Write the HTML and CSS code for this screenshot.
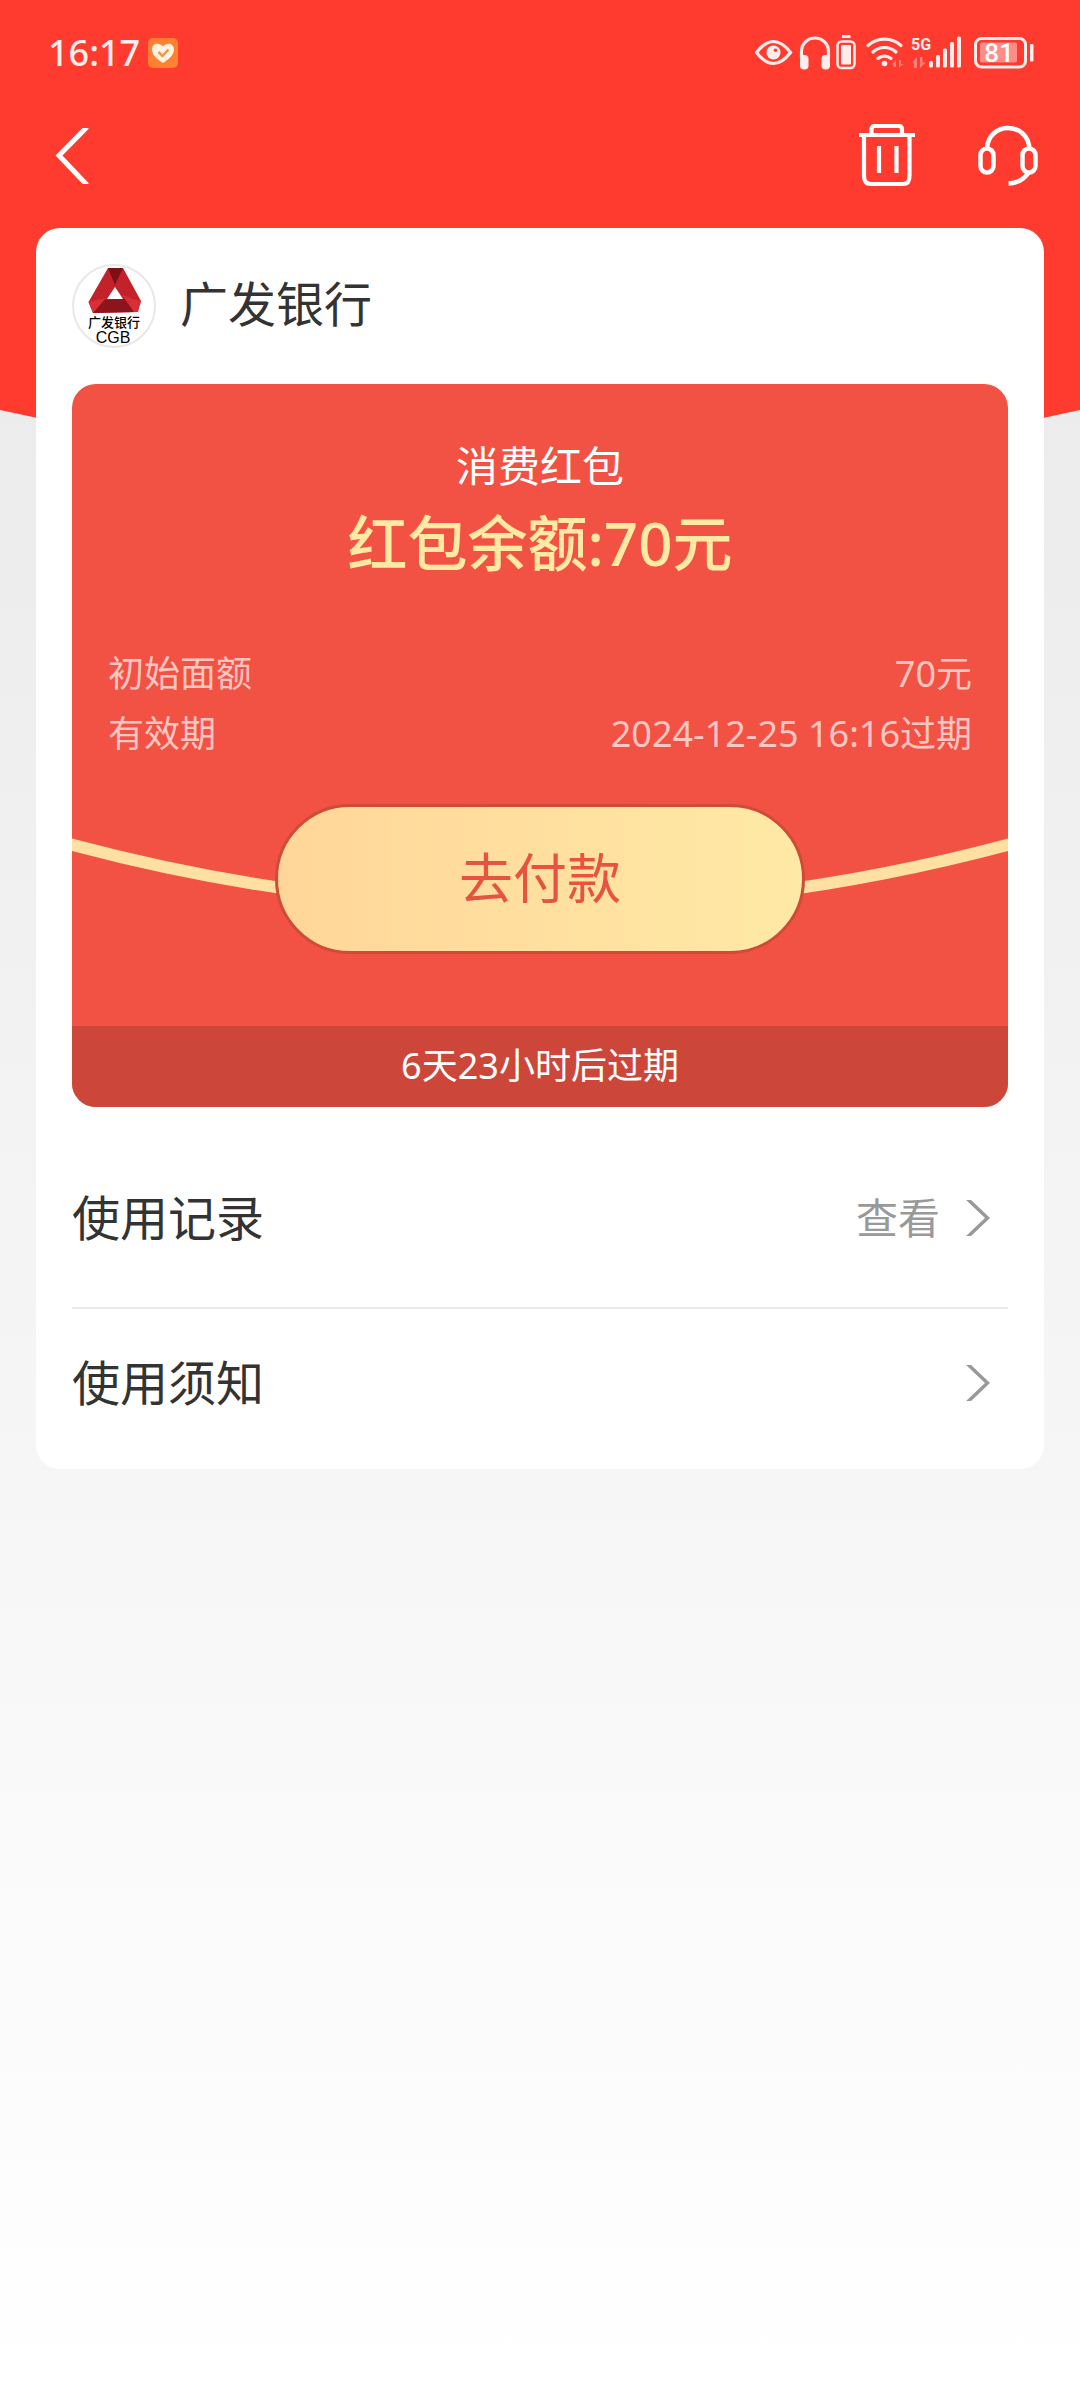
FILE: index.html
```html
<!DOCTYPE html>
<html lang="zh-CN">
<head>
<meta charset="utf-8">
<meta name="viewport" content="width=device-width, initial-scale=1">
<title>消费红包</title>
<link rel="stylesheet" href="styles.css">
</head>
<body>
<div class="page">
  <svg class="backdrop" viewBox="0 0 1080 440" preserveAspectRatio="none" aria-hidden="true">
    <path d="M0 0H1080V410Q540 530 0 410Z" fill="#ff3b30"/>
  </svg>

  <div class="status">
    <div class="status-left">
      <span class="clock">16:17</span>
      <svg width="30" height="30" viewBox="0 0 30 30" aria-hidden="true">
        <rect width="30" height="30" rx="5" fill="#ff8033"/>
        <path d="M15 25C9 21 4 17 4 11.500C4 5 11.500 4 15 8.500C18.500 4 26 5 26 11.500C26 17 21 21 15 25Z" fill="#fff3e0"/>
        <path d="M10.500 14l4 4 6-6.500" fill="none" stroke="#e89a50" stroke-width="2.500"/>
      </svg>
    </div>
    <svg class="status-icons" width="280" height="40" viewBox="0 0 280 40" aria-hidden="true">
      <g fill="none" stroke="#ffeceb" stroke-width="3.200">
        <path d="M1.500 19.500C8 11 13 8.500 18.500 8.500S29 11 35.500 19.500C29 28 24 30.500 18.500 30.500S8 28 1.500 19.500Z"/>
        <path d="M46.500 25V18.500a13.500 13.500 0 0 1 27 0V25"/>
        <rect x="82.500" y="8.500" width="17" height="26.500" rx="4" stroke-width="2.500"/>
        <path d="M113 12.500a24.500 24.500 0 0 1 33 0M118 19a17 17 0 0 1 23 0M123 25.500a10 10 0 0 1 13 0" stroke-linecap="round"/>
        <rect x="220.500" y="5.500" width="50" height="28.500" rx="6" stroke-width="3"/>
      </g>
      <g fill="#ffeceb">
        <circle cx="18.500" cy="19.500" r="7"/>
        <rect x="45" y="22" width="8.500" height="14.500" rx="4"/>
        <rect x="66.500" y="22" width="8.500" height="14.500" rx="4"/>
        <rect x="87" y="2" width="8.500" height="3"/>
        <rect x="86" y="12" width="10" height="19.500" rx="1"/>
        <circle cx="129.500" cy="30.500" r="2.800"/>
        <rect x="174" y="28" width="4" height="6.500" rx="1.500"/>
        <rect x="181" y="22" width="4" height="12.500" rx="1.500"/>
        <rect x="188" y="15.500" width="4" height="19" rx="1.500"/>
        <rect x="195" y="9" width="4" height="25.500" rx="1.500"/>
        <rect x="202" y="3.500" width="4" height="31" rx="1.500"/>
        <rect x="275" y="11" width="3.500" height="17.500" rx="1"/>
        <text class="net" x="156" y="17">5G</text>
      </g>
      <circle cx="20.500" cy="17.300" r="1.800" fill="#ff3b30"/>
      <rect x="225" y="9.500" width="37" height="20" rx="2" fill="#ff8d87"/>
      <g fill="#ff7f78">
        <path d="M137 31.500l4-4.500v7h-2.500v-2.500zM144 27h2v4h2.500l-4.500 3.500z"/>
        <path d="M157 29.500l5-5.500v11h-3v-5.500zM165 24h2.500v5.500h3l-5.500 5.500z"/>
      </g>
      <text class="level" x="244" y="29" text-anchor="middle" fill="#fff">81</text>
    </svg>
  </div>

  <header class="nav">
    <button class="icon-btn" type="button" aria-label="返回">
      <svg width="36" height="56" viewBox="0 0 36 56" fill="none" stroke="#fff" stroke-width="5"><path d="M33 -1L5 27.500L33 57"/></svg>
    </button>
    <div class="nav-actions">
      <button class="icon-btn" type="button" aria-label="删除">
        <svg width="56" height="64" viewBox="0 0 56 64" fill="none" stroke="#fff" stroke-width="4.200">
          <path d="M0 11H56M12.500 11V5.500Q12.500 2 16 2H39.500Q43 2 43 5.500V11M5 11V52Q5 60 12 60H44Q50.500 60 50.500 52V11M20 22V49M37.500 22V49"/>
        </svg>
      </button>
      <button class="icon-btn" type="button" aria-label="客服">
        <svg width="60" height="64" viewBox="0 0 60 64" fill="none" stroke="#fff" stroke-width="4.500">
          <rect x="2.500" y="24.500" width="13" height="24" rx="6.500"/>
          <rect x="44.500" y="24.500" width="13" height="24" rx="6.500"/>
          <path d="M9 25C10 -3 50 -3 51.500 25M51 48Q44 59 30.500 59.500"/>
        </svg>
      </button>
    </div>
  </header>

  <main class="card">
    <div class="bank">
      <svg class="logo" viewBox="0 0 84 84" role="img" aria-label="广发银行 CGB">
        <circle cx="42" cy="42" r="41" fill="#fff" stroke="#e8e8e8" stroke-width="2"/>
        <path d="M36 4H51L69 37L65 48L21 49L16.500 38Z" fill="#c4222b"/>
        <path d="M36 4H51L43 21Z" fill="#7d0f16"/>
        <path d="M21 49L27 36L62 34L66 48Z" fill="#8c141b"/>
        <path d="M16.500 38L34 34L21 49Z" fill="#d93038"/>
        <path d="M69 37L50 31L62 48H66Z" fill="#d92e36"/>
        <path d="M43 23L51 35H35Z" fill="#fff"/>
        <text class="logo-cn" x="42" y="63" text-anchor="middle">广发银行</text>
        <text class="logo-en" x="41" y="79" text-anchor="middle">CGB</text>
      </svg>
      <h1 class="bank-name">广发银行</h1>
    </div>

    <section class="packet">
      <h2 class="packet-title">消费红包</h2>
      <p class="packet-amount">红包余额:70元</p>
      <dl class="facts">
        <div class="fact"><dt>初始面额</dt><dd>70元</dd></div>
        <div class="fact"><dt>有效期</dt><dd>2024-12-25 16:16过期</dd></div>
      </dl>
      <div class="pay-area">
        <svg class="ribbon" viewBox="0 0 936 150" preserveAspectRatio="none" aria-hidden="true">
          <path d="M-10 38Q468 168 946 38" fill="none" stroke="#ffe0a3" stroke-width="12"/>
        </svg>
        <button class="pay" type="button">去付款</button>
      </div>
      <p class="expiry">6天23小时后过期</p>
    </section>

    <nav class="links">
      <a class="link" href="#records">
        <span class="label">使用记录</span>
        <span class="more"><span class="label">查看</span>
          <svg width="24" height="36" viewBox="0 0 24 36" fill="none" stroke="#999" stroke-width="3.500"><path d="M1.500 -1L21.500 18L1.500 37"/></svg>
        </span>
      </a>
      <a class="link" href="#notice">
        <span class="label">使用须知</span>
        <span class="more">
          <svg width="24" height="36" viewBox="0 0 24 36" fill="none" stroke="#999" stroke-width="3.500"><path d="M1.500 -1L21.500 18L1.500 37"/></svg>
        </span>
      </a>
    </nav>
  </main>
</div>
</body>
</html>
```

FILE: styles.css
```css
* {
  box-sizing: border-box;
}

body,
h1,
h2,
p,
dl,
dd {
  margin: 0;
}

body {
  font-family: "Noto Sans", "Noto Sans CJK SC", sans-serif;
  color: #333;
}

h1,
h2 {
  font-weight: 400;
}

button {
  padding: 0;
  border: 0;
  background: none;
  font: inherit;
}

svg {
  display: block;
}

.page {
  position: relative;
  min-height: 100vh;
  padding-bottom: 36px;
  background: linear-gradient(#e8e8e8, #fff);
}

.backdrop {
  position: absolute;
  top: 0;
  left: 0;
  width: 100%;
  height: 440px;
}

.status,
.nav,
.card {
  position: relative;
}

.status {
  display: flex;
  align-items: center;
  justify-content: space-between;
  height: 106px;
  padding: 0 45px 0 48px;
}

.status-left {
  display: flex;
  align-items: center;
  gap: 8px;
}

.clock {
  font-size: 36px;
  line-height: 48px;
  font-weight: 500;
  color: #ffeceb;
}

.net {
  font: 700 16px "Roboto", sans-serif;
}

.level {
  font: 500 26px "Roboto", sans-serif;
}

.nav {
  display: flex;
  align-items: center;
  justify-content: space-between;
  height: 100px;
  padding: 0 42px 0 54px;
}

.nav-actions {
  display: flex;
  gap: 63px;
}

.icon-btn {
  display: flex;
}

.card {
  margin: 22px 36px 0;
  padding: 36px 36px 12px;
  border-radius: 24px;
  background: #fff;
}

.bank {
  display: flex;
  align-items: center;
  gap: 24px;
  margin-bottom: 36px;
}

.logo {
  width: 84px;
  height: 84px;
}

.logo-cn {
  font: 500 13px "Noto Sans CJK SC", sans-serif;
}

.logo-en {
  font: 400 16px "Liberation Sans", sans-serif;
}

.bank-name {
  padding-bottom: 4px;
  font-size: 48px;
  line-height: 60px;
}

.packet {
  padding-top: 52px;
  border-radius: 24px;
  overflow: hidden;
  background: #f25244;
  color: #fff;
  text-align: center;
}

.packet-title {
  font-size: 42px;
  line-height: 60px;
}

.packet-amount {
  padding-top: 2px;
  font-size: 60px;
  line-height: 90px;
  font-weight: 500;
  color: #ffe9a3;
}

.facts {
  padding: 56px 36px 40px;
  font-size: 36px;
  line-height: 60px;
  color: #ffc6c1;
}

.fact {
  display: flex;
  justify-content: space-between;
}

.pay-area {
  position: relative;
  display: flex;
  justify-content: center;
  margin-bottom: 72px;
}

.ribbon {
  position: absolute;
  top: 0;
  left: 0;
  width: 100%;
  height: 100%;
}

.pay {
  position: relative;
  width: 530px;
  height: 150px;
  padding-bottom: 8px;
  border: 3px solid #cf4b37;
  border-radius: 75px;
  background: linear-gradient(90deg, #ffd699, #ffe9a6);
  color: #e65441;
  font-size: 54px;
}

.expiry {
  padding: 10px 0 11px;
  background: #cc473a;
  font-size: 36px;
  line-height: 60px;
}

.links {
  padding-top: 36px;
}

.link {
  display: flex;
  align-items: center;
  justify-content: space-between;
  height: 150px;
  padding-right: 18px;
  color: #333;
  font-size: 48px;
  text-decoration: none;
}

.link + .link {
  margin-top: 14px;
  border-top: 2px solid #ebebeb;
}

.label {
  padding-bottom: 6px;
}

.more {
  display: flex;
  align-items: center;
  gap: 26px;
  color: #999;
  font-size: 42px;
}
```
